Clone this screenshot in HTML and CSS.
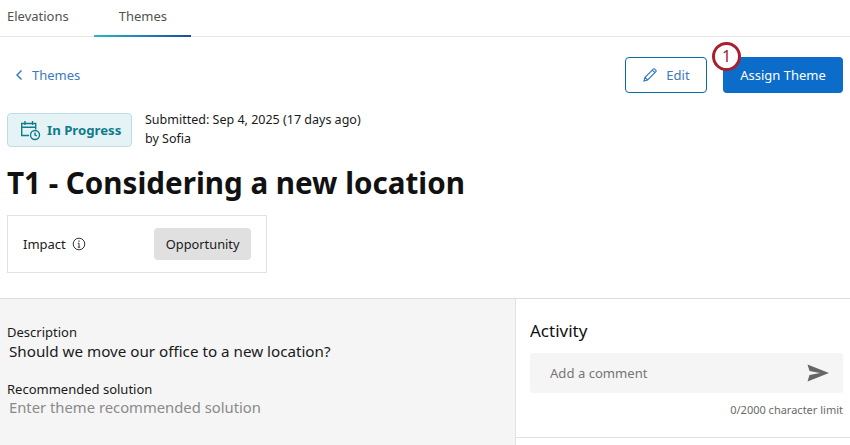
FILE: index.html
```html
<!DOCTYPE html>
<html lang="en">
<head>
  <meta charset="UTF-8" />
  <title>Themes</title>
  <link rel="stylesheet" href="styles.css">
</head>
<body>
<div class="tabs">
  <div class="tab">Elevations</div>
  <div class="tab active">Themes</div>
</div>

<div class="toolbar">
  <a class="back">
    <svg width="9" height="12" viewBox="0 0 9 12"><path d="M6.500 1.500 2 6l4.500 4.500" fill="none" stroke="#2f73c4" stroke-width="1.400"/></svg>
    Themes
  </a>
  <div class="actions">
    <button class="btn-edit">
      <svg width="16" height="16" viewBox="0 0 16 16"><path d="M2 14l1-3.600L11.300 2.100a1 1 0 0 1 1.400 0l1.200 1.200a1 1 0 0 1 0 1.400L5.600 13zM3 10.400 5.600 13M10.300 3.100l2.600 2.600" fill="none" stroke="#2f73c4" stroke-width="1.100"/></svg>
      Edit
    </button>
    <button class="btn-assign">Assign Theme</button>
    <span class="step">1</span>
  </div>
</div>

<div class="status-row">
  <div class="status">
    <svg width="21" height="21" viewBox="0 0 21 21" fill="none" stroke="#0f7c8a" stroke-width="1.400">
      <path d="M9 15.500H1.700V3.500h14v6M1.700 7.200h14M5 1v4M12.500 1v4"/>
      <circle cx="15" cy="15" r="4.500"/>
      <path d="M15 12.500V15l1.800 1"/>
    </svg>
    In Progress
  </div>
  <div class="submitted">
    <div>Submitted: Sep 4, 2025 (17 days ago)</div>
    <div>by Sofia</div>
  </div>
</div>

<h1>T1 - Considering a new location</h1>

<div class="impact">
  <div class="impact-label">
    Impact
    <svg width="14" height="14" viewBox="0 0 14 14" fill="none" stroke="#333" stroke-width="1"><circle cx="7" cy="7" r="5.800"/><path d="M7 6.200v4M5.800 10.200h2.400M5.800 6.200H7"/><path d="M7 3.600v1.200" stroke-width="1.200"/></svg>
  </div>
  <span class="tag">Opportunity</span>
</div>

<div class="bottom">
  <div class="details">
    <div class="field-label">Description</div>
    <div class="field-value">Should we move our office to a new location?</div>
    <div class="field-label second">Recommended solution</div>
    <div class="field-value empty">Enter theme recommended solution</div>
  </div>
  <div class="activity">
    <div class="activity-top">
      <h2>Activity</h2>
      <div class="comment">
        <span>Add a comment</span>
        <svg width="22" height="18" viewBox="0 0 22 18"><path d="M0.500 0.500 22 9 0.500 17.500l2-6.500L13 9 2.500 7z" fill="#666"/></svg>
      </div>
      <div class="limit">0/2000 character limit</div>
    </div>
  </div>
</div>
</body>
</html>
```

FILE: styles.css
```css
html, body {
  height: 100%;
}
body {
  margin: 0;
  height: 445px;
  overflow: hidden;
  background: #fff;
  font-family: "Noto Sans", sans-serif;
  font-size: 14px;
  color: #1a1a1a;
}
.tabs {
  display: flex;
  height: 36px;
  border-bottom: 1px solid #e6e6e6;
}
.tab {
  padding: 7px 7px 0;
  line-height: 19px;
  font-size: 13px;
  color: #525252;
}
.tab.active {
  width: 97px;
  box-sizing: border-box;
  height: 37px;
  margin-left: 18px;
  padding-left: 25px;
  border-bottom: 2px solid;
  border-image: linear-gradient(90deg, #2ab7ca, #1c4c9c) 1;
}
.toolbar {
  display: flex;
  justify-content: space-between;
  align-items: center;
  height: 36px;
  margin-top: 20px;
  padding: 0 7px 0 15px;
}
.back {
  display: flex;
  align-items: center;
  gap: 8px;
  color: #3d78c2;
  font-size: 13px;
}
.actions {
  position: relative;
  display: flex;
  gap: 16px;
}
button {
  height: 36px;
  border-radius: 4px;
  font-family: inherit;
  font-size: 13px;
}
.btn-edit {
  display: flex;
  align-items: center;
  justify-content: center;
  gap: 8px;
  width: 82px;
  background: #fff;
  border: 1px solid #0b6ba8;
  color: #3d78c2;
}
.btn-assign {
  width: 120px;
  background: #0b6cc9;
  border: none;
  color: #fff;
}
.step {
  position: absolute;
  left: 87px;
  top: -15px;
  width: 29px;
  height: 29px;
  box-sizing: border-box;
  border: 3px solid #a8202f;
  border-radius: 50%;
  background: #fff;
  color: #a8202f;
  font-size: 16px;
  line-height: 22px;
  text-align: center;
}
.status-row {
  display: flex;
  gap: 13px;
  margin: 20px 0 0 7px;
}
.status {
  display: flex;
  align-items: center;
  gap: 6px;
  width: 125px;
  height: 34px;
  box-sizing: border-box;
  padding-left: 12px;
  background: #e6f3f6;
  border: 1px solid #bcdde4;
  border-radius: 4px;
  color: #0f7c8a;
  font-size: 13.200px;
  font-weight: 700;
}
.submitted {
  font-size: 12.500px;
  line-height: 19px;
  margin-top: -3px;
}
h1 {
  margin: 14px 0 0 7px;
  font-size: 29.600px;
  line-height: 42px;
  font-weight: 700;
  color: #111;
}
.impact {
  display: flex;
  justify-content: space-between;
  align-items: center;
  width: 260px;
  height: 58px;
  box-sizing: border-box;
  margin: 11px 0 0 7px;
  padding: 0 15px;
  border: 1px solid #e2e2e2;
}
.impact-label {
  display: flex;
  align-items: center;
  gap: 6px;
  font-size: 13px;
}
.tag {
  padding: 0 11.500px;
  line-height: 32px;
  background: #e0e0e0;
  border-radius: 4px;
  font-size: 12.800px;
}
.bottom {
  display: flex;
  margin-top: 25px;
  border-top: 1px solid #dcdcdc;
  height: 150px;
}
.details {
  width: 516px;
  box-sizing: border-box;
  padding: 24px 7px 0;
  background: #f5f5f5;
  border-right: 1px solid #e2e2e2;
}
.field-label {
  font-size: 13px;
  line-height: 18px;
}
.field-label.second {
  margin-top: 19px;
}
.field-value {
  padding-left: 2px;
  font-size: 15.200px;
  line-height: 20px;
}
.field-value.empty {
  font-size: 14.800px;
  line-height: 19px;
  color: #8a8a8a;
}
.activity {
  flex: 1;
}
.activity-top {
  height: 139px;
  box-sizing: border-box;
  padding: 20px 7px 0 14px;
  border-bottom: 1px solid #e2e2e2;
}
h2 {
  margin: 0;
  font-size: 17px;
  line-height: 23px;
  font-weight: 400;
  color: #111;
}
.comment {
  display: flex;
  justify-content: space-between;
  align-items: center;
  height: 40px;
  margin-top: 11px;
  padding: 0 14px 0 20px;
  background: #f5f5f5;
  border-radius: 3px;
  font-size: 13.100px;
  color: #767676;
}
.limit {
  margin-top: 9px;
  text-align: right;
  font-size: 11px;
  line-height: 16px;
  color: #6a6a6a;
}
```
